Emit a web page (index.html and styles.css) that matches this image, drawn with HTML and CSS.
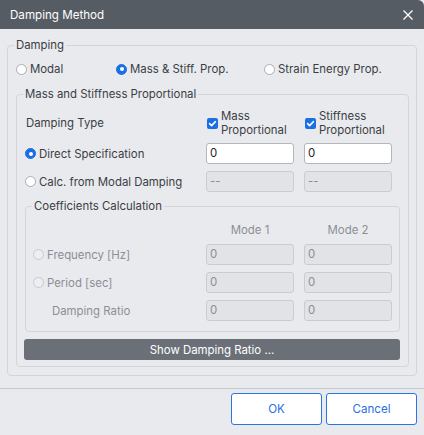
FILE: index.html
```html
<!DOCTYPE html>
<html>
<head>
<meta charset="utf-8">
<link rel="stylesheet" href="styles.css">
</head>
<body>
<div class="dialog">
  <div class="titlebar">
    <span class="title">Damping Method</span>
    <svg class="close" width="10" height="10" viewBox="0 0 10 10"><path d="M0.5 0.5 L9.5 9.5 M9.5 0.5 L0.5 9.5" stroke="#ffffff" stroke-width="1.3" fill="none"/></svg>
  </div>
  <div class="body">
    <fieldset class="group outer">
      <legend>Damping</legend>
      <div class="outer-in">
        <div class="method-row">
          <label class="opt m1"><span class="radio"></span>Modal</label>
          <label class="opt m2"><span class="radio on"></span>Mass &amp; Stiff. Prop.</label>
          <label class="opt"><span class="radio"></span>Strain Energy Prop.</label>
        </div>
        <fieldset class="group mid">
          <legend>Mass and Stiffness Proportional</legend>
          <div class="mid-in">
            <div class="row head">
              <div class="cell lbl type">Damping Type</div>
              <label class="chk"><span class="checkbox"><svg width="11" height="11" viewBox="0 0 11 11"><path d="M2.6 5.6 L4.6 7.6 L8.4 3.6" stroke="#fff" stroke-width="1.6" fill="none" stroke-linecap="round" stroke-linejoin="round"/></svg></span><span>Mass<br>Proportional</span></label>
              <label class="chk"><span class="checkbox"><svg width="11" height="11" viewBox="0 0 11 11"><path d="M2.6 5.6 L4.6 7.6 L8.4 3.6" stroke="#fff" stroke-width="1.6" fill="none" stroke-linecap="round" stroke-linejoin="round"/></svg></span><span>Stiffness<br>Proportional</span></label>
            </div>
            <div class="row first">
              <label class="cell opt"><span class="radio on"></span>Direct Specification</label>
              <div class="field">0</div>
              <div class="field">0</div>
            </div>
            <div class="row">
              <label class="cell opt"><span class="radio"></span>Calc. from Modal Damping</label>
              <div class="field dis">--</div>
              <div class="field dis">--</div>
            </div>

            <fieldset class="group coeff">
              <legend>Coefficients Calculation</legend>
              <div class="coeff-in">
                <div class="row mhead">
                  <div class="cell"></div>
                  <div class="mode">Mode 1</div>
                  <div class="mode">Mode 2</div>
                </div>
                <div class="row">
                  <label class="cell opt muted"><span class="radio off"></span>Frequency [Hz]</label>
                  <div class="field dis">0</div>
                  <div class="field dis">0</div>
                </div>
                <div class="row">
                  <label class="cell opt muted"><span class="radio off"></span>Period [sec]</label>
                  <div class="field dis">0</div>
                  <div class="field dis">0</div>
                </div>
                <div class="row">
                  <div class="cell muted ratio">Damping Ratio</div>
                  <div class="field dis">0</div>
                  <div class="field dis">0</div>
                </div>
              </div>
            </fieldset>

            <button class="show">Show Damping Ratio ...</button>
          </div>
        </fieldset>
      </div>
    </fieldset>
  </div>
  <div class="footer">
    <button class="btn">OK</button>
    <button class="btn">Cancel</button>
  </div>
</div>
</body>
</html>
```

FILE: styles.css
```css
* { box-sizing: border-box; }
html, body { margin: 0; padding: 0; }
body {
  width: 424px;
  height: 435px;
  background: #e9eaee;
  font-family: "Inter", "Noto Sans", sans-serif;
  font-size: 11.4px;
  color: #3b3e44;
  overflow: hidden;
}
.dialog { width: 424px; height: 435px; display: flex; flex-direction: column; }

.titlebar {
  height: 29px;
  flex: none;
  background: #565c64;
  border-top-right-radius: 6px;
  display: flex;
  align-items: center;
  justify-content: space-between;
  padding: 0 11px 0 10px;
  color: #ffffff;
  font-size: 11.6px;
}
.close { display: block; }

.body { padding: 8px 7px 12px 7px; }

.group {
  margin: 0;
  padding: 0;
  border: 1px solid #d3d5d9;
  border-radius: 4px;
  min-width: 0;
}
.group > legend {
  margin-left: 6px;
  padding: 0 2px;
  line-height: 16px;
  height: 16px;
}

.outer-in { padding: 8px 7px 8px 8px; }

.method-row {
  display: flex;
  height: 16px;
  align-items: center;
}
.m1 { width: 100px; }
.m2 { width: 148px; }

.opt { display: flex; align-items: center; gap: 3px; line-height: 16px; white-space: nowrap; }

.radio {
  width: 11px; height: 11px;
  border-radius: 50%;
  background: #ffffff;
  border: 1px solid #a9adb3;
  flex: none;
  position: relative;
}
.radio.on { background: #1b6fe6; border-color: #1b6fe6; }
.radio.on::after {
  content: "";
  position: absolute;
  left: 2.5px; top: 2.5px;
  width: 4px; height: 4px;
  border-radius: 50%;
  background: #ffffff;
}
.radio.off { background: #eceef1; border-color: #c6c9ce; }

.mid { margin-top: 9px; }
.mid-in { padding: 7px 8px 6px 8px; }

.row {
  display: flex;
  align-items: center;
  gap: 10px;
  height: 21px;
  margin-top: 7px;
}
.row.head { height: 28px; margin-top: 0; }
.row.first { margin-top: 6px; }
.row > .cell { width: 171px; flex: none; }
.type { padding-left: 1px; }

.chk { width: 88px; flex: none; display: flex; align-items: center; gap: 3px; padding-left: 1px; line-height: 14px; white-space: nowrap; }
.checkbox {
  width: 11px; height: 11px;
  background: #1b6fe6;
  border-radius: 2px;
  flex: none;
  display: block;
}
.checkbox svg { display: block; }

.field {
  width: 88px;
  flex: none;
  height: 21px;
  border: 1px solid #b3b6bb;
  border-radius: 3px;
  background: #ffffff;
  padding-left: 3px;
  line-height: 19px;
  color: #23262b;
}
.field.dis {
  background: #e1e3e6;
  border-color: #c9ccd1;
  color: #8b8e94;
}

.coeff { margin-top: 6px; }
.coeff-in { padding: 8px 7px 10px 7px; }
.coeff-in .row > .cell { width: 163px; }
.coeff-in .row.mhead { height: 16px; margin-top: 0; }
.coeff-in .mhead + .row { margin-top: 6px; }
.mode { width: 88px; flex: none; text-align: center; color: #8b8e94; line-height: 16px; }
.muted { color: #8b8e94; }
.ratio { padding-left: 19px; }

.show {
  display: block;
  width: 376px;
  height: 21px;
  margin: 7px 0 0 -1px;
  border: none;
  border-radius: 3px;
  background: #6b7078;
  color: #ffffff;
  font-family: inherit;
  font-size: 11.4px;
  padding: 0;
}

.footer {
  border-top: 1px solid #c5c8cd;
  padding: 4px 7px 0 0;
  display: flex;
  justify-content: flex-end;
  gap: 4px;
}
.btn {
  width: 91px;
  height: 32px;
  background: #ffffff;
  border: 1px solid #2a74e8;
  border-radius: 3px;
  color: #2a6fe0;
  font-family: inherit;
  font-size: 11.6px;
  padding: 0;
}
```
